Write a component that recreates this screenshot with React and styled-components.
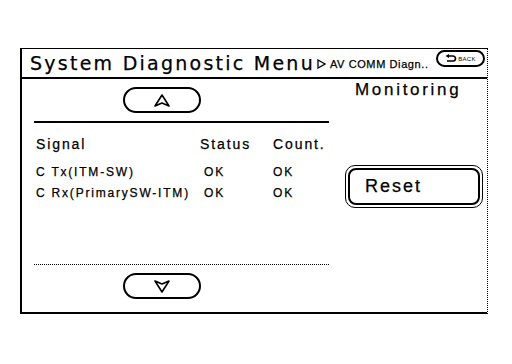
import React from 'react';
import styled, { createGlobalStyle } from 'styled-components';

const Global = createGlobalStyle`
  html, body { margin: 0; padding: 0; background: #fff; }
  body {
    font-family: "Liberation Sans", Arial, Helvetica, sans-serif;
    color: #000;
    -webkit-text-stroke: 0.25px #000;
  }
`;

const Page = styled.div`
  width: 512px;
  height: 364px;
  box-sizing: border-box;
  padding: 48px 0 0 20px;
`;

const Frame = styled.div`
  width: 468px;
  height: 266px;
  box-sizing: border-box;
  border-left: 2px solid #000;
  border-top: 1px solid #000;
  border-bottom: 2px solid #000;
  border-right: 1px dotted #000;
  display: flex;
  flex-direction: column;
`;

const Header = styled.div`
  height: 30px;
  box-sizing: border-box;
  border-bottom: 2px solid #000;
  display: flex;
  align-items: center;
  padding: 0 2px 0 8px;
`;

const Title = styled.span`
  font-family: "DejaVu Sans", "Liberation Sans", sans-serif;
  font-size: 19px;
  line-height: 21px;
  letter-spacing: 2.25px;
  white-space: nowrap;
  margin-top: 1px;
`;

const Crumb = styled.span`
  font-size: 11px;
  letter-spacing: 0.6px;
  margin-left: 2px;
  white-space: nowrap;
  display: flex;
  align-items: center;
  gap: 4px;
  margin-top: 2px;
`;

const BackButton = styled.div`
  align-self: flex-start;
  margin: 1px 0 0 auto;
  width: 49px;
  height: 17px;
  box-sizing: border-box;
  border: 2px solid #000;
  border-radius: 9px;
  display: flex;
  align-items: center;
  justify-content: center;
  gap: 1px;
  font-size: 6px;
  letter-spacing: 0.3px;
  -webkit-text-stroke: 0;
`;

const Body = styled.div`
  flex: 1;
  display: flex;
`;

const LeftColumn = styled.div`
  width: 310px;
  box-sizing: border-box;
  padding: 0 3px 0 12px;
  display: flex;
  flex-direction: column;
`;

const ArrowButton = styled.div`
  align-self: flex-start;
  margin-left: 89px;
  margin-top: ${p => p.$top}px;
  margin-bottom: ${p => p.$bottom}px;
  width: 78px;
  height: 26px;
  box-sizing: border-box;
  border: 2px solid #000;
  border-radius: 13px;
  display: flex;
  align-items: center;
  justify-content: center;
`;

const Rule = styled.div`
  border-top: ${p => (p.$dotted ? '1px dotted #000' : '2px solid #000')};
  margin-top: ${p => p.$top || 0}px;
`;

const Table = styled.div`
  flex: 1;
  display: grid;
  grid-template-columns: 164px 73px 1fr;
  grid-auto-rows: min-content;
  align-content: start;
  padding-left: 2px;
  margin-top: 13px;
`;

const HeadCell = styled.div`
  font-size: 14px;
  letter-spacing: 1.9px;
  line-height: 16px;
  margin-bottom: 13px;
`;

const Cell = styled.div`
  font-size: 12px;
  letter-spacing: 1.8px;
  line-height: 14px;
  margin-bottom: 7px;
  white-space: nowrap;
  padding-left: ${p => p.$indent || 0}px;
`;

const RightColumn = styled.div`
  flex: 1;
  display: flex;
  flex-direction: column;
  padding-left: 13px;
`;

const Monitoring = styled.div`
  font-size: 17px;
  letter-spacing: 2.7px;
  line-height: 20px;
  margin: 1px 0 0 10px;
`;

const ResetOuter = styled.div`
  margin-top: 65px;
  width: 138px;
  height: 43px;
  box-sizing: border-box;
  border: 1px solid #000;
  border-radius: 10px;
  padding: 2px;
`;

const ResetInner = styled.div`
  height: 100%;
  box-sizing: border-box;
  border: 2px solid #000;
  border-radius: 8px;
  display: flex;
  align-items: center;
  padding-left: 15px;
  font-size: 18px;
  letter-spacing: 2px;
`;

const UpArrow = () => (
  <svg width="16" height="13" viewBox="0 0 16 13">
    <path d="M8 1 L15 12 L8 9 L1 12 Z" fill="none" stroke="#000" strokeWidth="1.6" strokeLinejoin="round" />
  </svg>
);

const DownArrow = () => (
  <svg width="16" height="13" viewBox="0 0 16 13">
    <path d="M1 1 L8 4 L15 1 L8 12 Z" fill="none" stroke="#000" strokeWidth="1.6" strokeLinejoin="round" />
  </svg>
);

const PlayMark = () => (
  <svg width="9" height="10" viewBox="0 0 9 10">
    <path d="M1 1 L8 5 L1 9 Z" fill="none" stroke="#000" strokeWidth="1.3" />
  </svg>
);

const BackIcon = () => (
  <svg width="12" height="9" viewBox="0 0 12 9">
    <path d="M3 2 H8 A2.5 2.5 0 0 1 8 7 H2" fill="none" stroke="#000" strokeWidth="1.6" />
    <path d="M0.5 2 L4 0 L4 4 Z" fill="#000" />
  </svg>
);

const rows = [
  ['C Tx(ITM-SW)', 'OK', 'OK'],
  ['C Rx(PrimarySW-ITM)', 'OK', 'OK'],
];

export default function App() {
  return (
    <Page>
      <Global />
      <Frame>
        <Header>
          <Title>System Diagnostic Menu</Title>
          <Crumb>
            <PlayMark />
            AV COMM Diagn..
          </Crumb>
          <BackButton>
            <BackIcon />
            BACK
          </BackButton>
        </Header>
        <Body>
          <LeftColumn>
            <ArrowButton $top={8} $bottom={8}>
              <UpArrow />
            </ArrowButton>
            <Rule />
            <Table>
              <HeadCell>Signal</HeadCell>
              <HeadCell>Status</HeadCell>
              <HeadCell>Count.</HeadCell>
              {rows.map(r => (
                <React.Fragment key={r[0]}>
                  <Cell>{r[0]}</Cell>
                  <Cell $indent={4}>{r[1]}</Cell>
                  <Cell>{r[2]}</Cell>
                </React.Fragment>
              ))}
            </Table>
            <Rule $dotted />
            <ArrowButton $top={8} $bottom={13}>
              <DownArrow />
            </ArrowButton>
          </LeftColumn>
          <RightColumn>
            <Monitoring>Monitoring</Monitoring>
            <ResetOuter>
              <ResetInner>Reset</ResetInner>
            </ResetOuter>
          </RightColumn>
        </Body>
      </Frame>
    </Page>
  );
}
